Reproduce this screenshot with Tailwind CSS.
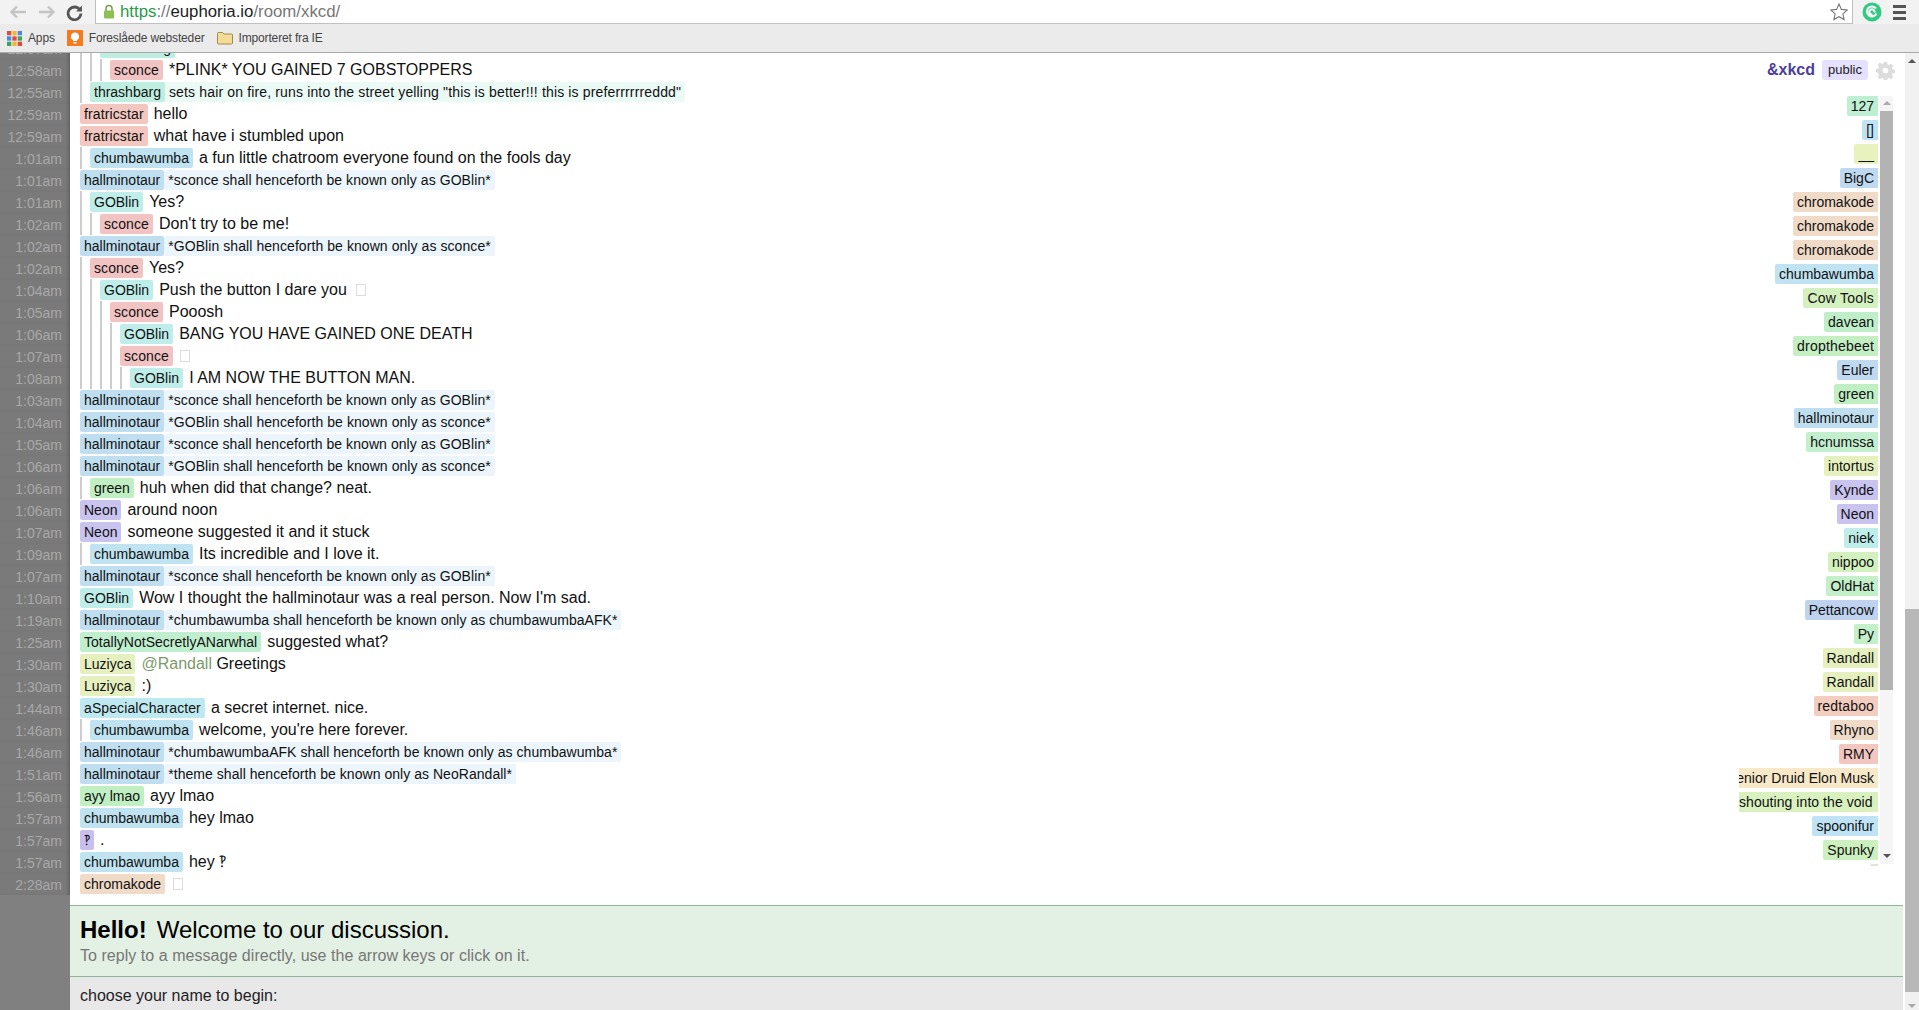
<!DOCTYPE html>
<html lang="en">
<head>
    <meta charset="UTF-8">
    <title>&xkcd - euphoria</title>
    <script src="https://cdn.jsdelivr.net/npm/@tailwindcss/browser@4"></script>
</head>
<body class="h-[1010px] overflow-hidden bg-white font-['Liberation_Sans',Arial,sans-serif] text-[#111]">
    <!-- browser chrome -->
    <div class="flex h-[24px] items-center bg-[#f2f2f2]">
        <div class="flex w-[95px] items-center pl-[8px]">
            <svg class="h-[16px] w-[20px]" viewBox="0 0 20 16" fill="none" stroke="#c4c4c4" stroke-width="2.4"><path d="M18 8H4M9 2.500 3.500 8 9 13.500"/></svg>
            <svg class="ml-[9px] h-[16px] w-[20px]" viewBox="0 0 20 16" fill="none" stroke="#c4c4c4" stroke-width="2.4"><path d="M2 8h14M11 2.500 16.500 8 11 13.500"/></svg>
            <svg class="ml-[9px] h-[17px] w-[17px]" viewBox="0 0 16 16" fill="none" stroke="#555" stroke-width="2.600"><path d="M13 5.500A6 6 0 1 0 14 9"/><path d="M15 1.500V7H9.500z" fill="#555" stroke="none"/></svg>
        </div>
        <div class="flex h-[24px] w-[1758px] items-center border-r border-b border-l border-[#c0c0c0] bg-white pl-[7px]">
            <svg class="h-[15px] w-[12px]" viewBox="0 0 12 15"><path d="M3 7V4.500a3 3 0 0 1 6 0V7" fill="none" stroke="#7a9a50" stroke-width="1.500"/><rect x="1" y="6.500" width="10" height="8" rx="1" fill="#8cc152"/></svg>
            <span class="ml-[5px] text-[16.8px] text-[#777]"><span class="text-[#2a9a48]">https</span>://<span class="text-[#222]">euphoria.io</span>/room/xkcd/</span>
            <svg class="ml-auto mr-[4px] h-[18px] w-[18px]" viewBox="0 0 18 18" fill="#fff" stroke="#777" stroke-width="1.100"><path d="m9 1 2.400 5.400 5.800.6-4.300 3.900 1.200 5.700L9 13.700l-5.100 2.900 1.200-5.700L.8 7l5.800-.6z"/></svg>
        </div>
        <svg class="ml-[9px] h-[20px] w-[20px]" viewBox="0 0 20 20"><circle cx="10" cy="10" r="9.500" fill="#2ecb80"/><path d="M14.500 11.500A5 5 0 1 1 14 6.500M12.500 10.500a2.600 2.600 0 1 0-2 2" fill="none" stroke="#fff" stroke-width="2"/></svg>
        <div class="ml-[11px] flex w-[13px] flex-col gap-[3px]">
            <span class="h-[3px] bg-[#555]"></span><span class="h-[3px] bg-[#555]"></span><span class="h-[3px] bg-[#555]"></span>
        </div>
    </div>
    <div class="flex h-[29px] items-center border-b border-[#a9a9a9] bg-[#ebebeb] pl-[7px] text-[12px] tracking-[-0.15px] text-[#444]">
        <svg class="h-[15px] w-[15px]" viewBox="0 0 14 14">
            <rect width="4" height="4" fill="#e0493b"/><rect x="5" width="4" height="4" fill="#f2b632"/><rect x="10" width="4" height="4" fill="#4a88e8"/>
            <rect y="5" width="4" height="4" fill="#4a88e8"/><rect x="5" y="5" width="4" height="4" fill="#e0493b"/><rect x="10" y="5" width="4" height="4" fill="#3aa757"/>
            <rect y="10" width="4" height="4" fill="#3aa757"/><rect x="5" y="10" width="4" height="4" fill="#f2b632"/><rect x="10" y="10" width="4" height="4" fill="#e0493b"/>
        </svg>
        <span class="ml-[6px]">Apps</span>
        <svg class="ml-[12px] h-[16px] w-[16px]" viewBox="0 0 16 16"><rect width="16" height="16" fill="#f47b20"/><path d="M8 2.500a4 4 0 0 0-2 7.500V11h4v-1a4 4 0 0 0-2-7.500zM6.500 12h3v1.500h-3z" fill="#fff"/></svg>
        <span class="ml-[6px]">Foreslåede websteder</span>
        <svg class="ml-[12px] h-[14px] w-[16px]" viewBox="0 0 16 14"><path d="M.5 2.500a1 1 0 0 1 1-1h4l1.500 1.500h7.500a1 1 0 0 1 1 1v8a1 1 0 0 1-1 1h-13a1 1 0 0 1-1-1z" fill="#f5dc96" stroke="#a08c50"/></svg>
        <span class="ml-[6px]">Importeret fra IE</span>
    </div>

    <div class="flex h-[957px]">
        <div class="flex w-[1903px] flex-col">
            <div class="flex h-[852px] overflow-hidden">
                <!-- chat log -->
                <div class="-mt-[16px] flex-1 bg-[linear-gradient(90deg,#808080_70px,#fff_70px)] text-[16px]">
                    <div class="flex h-[22px]"><span class="w-[70px] bg-[#7a7a7a] pr-[8px] pt-[2px] text-right text-[14px] text-[#a8a8a8] shadow-[inset_-4px_0_4px_-3px_#0004]">12:57am</span><div class="flex items-center pl-[10px]"><span class="mr-[8px] h-full w-[2px] bg-[#ccc]"></span><span class="mr-[8px] h-full w-[2px] bg-[#ccc]"></span><span class="flex h-[20px] items-center rounded-[2px] bg-[#bfeee0] px-[4px] text-[14px]">thrashbarg</span></div></div>
                    <div class="flex h-[22px]"><span class="w-[70px] bg-[#7a7a7a] pr-[8px] pt-[2px] text-right text-[14px] text-[#a8a8a8] shadow-[inset_-4px_0_4px_-3px_#0004]">12:58am</span><div class="flex items-center pl-[10px]"><span class="mr-[8px] h-full w-[2px] bg-[#ccc]"></span><span class="mr-[8px] h-full w-[2px] bg-[#ccc]"></span><span class="mr-[8px] h-full w-[2px] bg-[#ccc]"></span><span class="flex h-[20px] items-center rounded-[2px] bg-[#f1c3c3] px-[4px] text-[14px] tracking-[0.1px]">sconce</span><span class="ml-[6px]">*PLINK* YOU GAINED 7 GOBSTOPPERS</span></div></div>
                    <div class="flex h-[22px]"><span class="w-[70px] bg-[#7a7a7a] pr-[8px] pt-[2px] text-right text-[14px] text-[#a8a8a8] shadow-[inset_-4px_0_4px_-3px_#0004]">12:55am</span><div class="flex items-center pl-[10px]"><span class="mr-[8px] h-full w-[2px] bg-[#ccc]"></span><span class="flex h-[20px] items-center rounded-[2px] bg-[#bfeee0] px-[4px] text-[14px]">thrashbarg</span><span class="flex h-[20px] items-center rounded-[2px] bg-[#ecfaf6] pl-[4px] pr-[4px] text-[14px] tracking-[0.15px]">sets hair on fire, runs into the street yelling "this is better!!! this is preferrrrrreddd"</span></div></div>
                    <div class="flex h-[22px]"><span class="w-[70px] bg-[#7a7a7a] pr-[8px] pt-[2px] text-right text-[14px] text-[#a8a8a8] shadow-[inset_-4px_0_4px_-3px_#0004]">12:59am</span><div class="flex items-center pl-[10px]"><span class="flex h-[20px] items-center rounded-[2px] bg-[#f3c7bf] px-[4px] text-[14px] tracking-[0.12px]">fratricstar</span><span class="ml-[6px]">hello</span></div></div>
                    <div class="flex h-[22px]"><span class="w-[70px] bg-[#7a7a7a] pr-[8px] pt-[2px] text-right text-[14px] text-[#a8a8a8] shadow-[inset_-4px_0_4px_-3px_#0004]">12:59am</span><div class="flex items-center pl-[10px]"><span class="flex h-[20px] items-center rounded-[2px] bg-[#f3c7bf] px-[4px] text-[14px] tracking-[0.12px]">fratricstar</span><span class="ml-[6px]">what have i stumbled upon</span></div></div>
                    <div class="flex h-[22px]"><span class="w-[70px] bg-[#7a7a7a] pr-[8px] pt-[2px] text-right text-[14px] text-[#a8a8a8] shadow-[inset_-4px_0_4px_-3px_#0004]">1:01am</span><div class="flex items-center pl-[10px]"><span class="mr-[8px] h-full w-[2px] bg-[#ccc]"></span><span class="flex h-[20px] items-center rounded-[2px] bg-[#bfe3f0] px-[4px] text-[14px]">chumbawumba</span><span class="ml-[6px]">a fun little chatroom everyone found on the fools day</span></div></div>
                    <div class="flex h-[22px]"><span class="w-[70px] bg-[#7a7a7a] pr-[8px] pt-[2px] text-right text-[14px] text-[#a8a8a8] shadow-[inset_-4px_0_4px_-3px_#0004]">1:01am</span><div class="flex items-center pl-[10px]"><span class="flex h-[20px] items-center rounded-[2px] bg-[#bfdff0] px-[4px] text-[14px]">hallminotaur</span><span class="flex h-[20px] items-center rounded-[2px] bg-[#ebf5fb] pl-[4px] pr-[4px] text-[14px] tracking-[0.07px]">*sconce shall henceforth be known only as GOBlin*</span></div></div>
                    <div class="flex h-[22px]"><span class="w-[70px] bg-[#7a7a7a] pr-[8px] pt-[2px] text-right text-[14px] text-[#a8a8a8] shadow-[inset_-4px_0_4px_-3px_#0004]">1:01am</span><div class="flex items-center pl-[10px]"><span class="mr-[8px] h-full w-[2px] bg-[#ccc]"></span><span class="flex h-[20px] items-center rounded-[2px] bg-[#bfeeea] px-[4px] text-[14px]">GOBlin</span><span class="ml-[6px]">Yes?</span></div></div>
                    <div class="flex h-[22px]"><span class="w-[70px] bg-[#7a7a7a] pr-[8px] pt-[2px] text-right text-[14px] text-[#a8a8a8] shadow-[inset_-4px_0_4px_-3px_#0004]">1:02am</span><div class="flex items-center pl-[10px]"><span class="mr-[8px] h-full w-[2px] bg-[#ccc]"></span><span class="mr-[8px] h-full w-[2px] bg-[#ccc]"></span><span class="flex h-[20px] items-center rounded-[2px] bg-[#f1c3c3] px-[4px] text-[14px] tracking-[0.1px]">sconce</span><span class="ml-[6px]">Don't try to be me!</span></div></div>
                    <div class="flex h-[22px]"><span class="w-[70px] bg-[#7a7a7a] pr-[8px] pt-[2px] text-right text-[14px] text-[#a8a8a8] shadow-[inset_-4px_0_4px_-3px_#0004]">1:02am</span><div class="flex items-center pl-[10px]"><span class="flex h-[20px] items-center rounded-[2px] bg-[#bfdff0] px-[4px] text-[14px]">hallminotaur</span><span class="flex h-[20px] items-center rounded-[2px] bg-[#ebf5fb] pl-[4px] pr-[4px] text-[14px] tracking-[0.07px]">*GOBlin shall henceforth be known only as sconce*</span></div></div>
                    <div class="flex h-[22px]"><span class="w-[70px] bg-[#7a7a7a] pr-[8px] pt-[2px] text-right text-[14px] text-[#a8a8a8] shadow-[inset_-4px_0_4px_-3px_#0004]">1:02am</span><div class="flex items-center pl-[10px]"><span class="mr-[8px] h-full w-[2px] bg-[#ccc]"></span><span class="flex h-[20px] items-center rounded-[2px] bg-[#f1c3c3] px-[4px] text-[14px] tracking-[0.1px]">sconce</span><span class="ml-[6px]">Yes?</span></div></div>
                    <div class="flex h-[22px]"><span class="w-[70px] bg-[#7a7a7a] pr-[8px] pt-[2px] text-right text-[14px] text-[#a8a8a8] shadow-[inset_-4px_0_4px_-3px_#0004]">1:04am</span><div class="flex items-center pl-[10px]"><span class="mr-[8px] h-full w-[2px] bg-[#ccc]"></span><span class="mr-[8px] h-full w-[2px] bg-[#ccc]"></span><span class="flex h-[20px] items-center rounded-[2px] bg-[#bfeeea] px-[4px] text-[14px]">GOBlin</span><span class="ml-[6px]">Push the button I dare you</span><span class="ml-[9px] h-[12px] w-[10px] border border-[#ddd]"></span></div></div>
                    <div class="flex h-[22px]"><span class="w-[70px] bg-[#7a7a7a] pr-[8px] pt-[2px] text-right text-[14px] text-[#a8a8a8] shadow-[inset_-4px_0_4px_-3px_#0004]">1:05am</span><div class="flex items-center pl-[10px]"><span class="mr-[8px] h-full w-[2px] bg-[#ccc]"></span><span class="mr-[8px] h-full w-[2px] bg-[#ccc]"></span><span class="mr-[8px] h-full w-[2px] bg-[#ccc]"></span><span class="flex h-[20px] items-center rounded-[2px] bg-[#f1c3c3] px-[4px] text-[14px] tracking-[0.1px]">sconce</span><span class="ml-[6px]">Pooosh</span></div></div>
                    <div class="flex h-[22px]"><span class="w-[70px] bg-[#7a7a7a] pr-[8px] pt-[2px] text-right text-[14px] text-[#a8a8a8] shadow-[inset_-4px_0_4px_-3px_#0004]">1:06am</span><div class="flex items-center pl-[10px]"><span class="mr-[8px] h-full w-[2px] bg-[#ccc]"></span><span class="mr-[8px] h-full w-[2px] bg-[#ccc]"></span><span class="mr-[8px] h-full w-[2px] bg-[#ccc]"></span><span class="mr-[8px] h-full w-[2px] bg-[#ccc]"></span><span class="flex h-[20px] items-center rounded-[2px] bg-[#bfeeea] px-[4px] text-[14px]">GOBlin</span><span class="ml-[6px]">BANG YOU HAVE GAINED ONE DEATH</span></div></div>
                    <div class="flex h-[22px]"><span class="w-[70px] bg-[#7a7a7a] pr-[8px] pt-[2px] text-right text-[14px] text-[#a8a8a8] shadow-[inset_-4px_0_4px_-3px_#0004]">1:07am</span><div class="flex items-center pl-[10px]"><span class="mr-[8px] h-full w-[2px] bg-[#ccc]"></span><span class="mr-[8px] h-full w-[2px] bg-[#ccc]"></span><span class="mr-[8px] h-full w-[2px] bg-[#ccc]"></span><span class="mr-[8px] h-full w-[2px] bg-[#ccc]"></span><span class="flex h-[20px] items-center rounded-[2px] bg-[#f1c3c3] px-[4px] text-[14px] tracking-[0.1px]">sconce</span><span class="ml-[7px] h-[12px] w-[10px] border border-[#ddd]"></span></div></div>
                    <div class="flex h-[22px]"><span class="w-[70px] bg-[#7a7a7a] pr-[8px] pt-[2px] text-right text-[14px] text-[#a8a8a8] shadow-[inset_-4px_0_4px_-3px_#0004]">1:08am</span><div class="flex items-center pl-[10px]"><span class="mr-[8px] h-full w-[2px] bg-[#ccc]"></span><span class="mr-[8px] h-full w-[2px] bg-[#ccc]"></span><span class="mr-[8px] h-full w-[2px] bg-[#ccc]"></span><span class="mr-[8px] h-full w-[2px] bg-[#ccc]"></span><span class="mr-[8px] h-full w-[2px] bg-[#ccc]"></span><span class="flex h-[20px] items-center rounded-[2px] bg-[#bfeeea] px-[4px] text-[14px]">GOBlin</span><span class="ml-[6px]">I AM NOW THE BUTTON MAN.</span></div></div>
                    <div class="flex h-[22px]"><span class="w-[70px] bg-[#7a7a7a] pr-[8px] pt-[2px] text-right text-[14px] text-[#a8a8a8] shadow-[inset_-4px_0_4px_-3px_#0004]">1:03am</span><div class="flex items-center pl-[10px]"><span class="flex h-[20px] items-center rounded-[2px] bg-[#bfdff0] px-[4px] text-[14px]">hallminotaur</span><span class="flex h-[20px] items-center rounded-[2px] bg-[#ebf5fb] pl-[4px] pr-[4px] text-[14px] tracking-[0.07px]">*sconce shall henceforth be known only as GOBlin*</span></div></div>
                    <div class="flex h-[22px]"><span class="w-[70px] bg-[#7a7a7a] pr-[8px] pt-[2px] text-right text-[14px] text-[#a8a8a8] shadow-[inset_-4px_0_4px_-3px_#0004]">1:04am</span><div class="flex items-center pl-[10px]"><span class="flex h-[20px] items-center rounded-[2px] bg-[#bfdff0] px-[4px] text-[14px]">hallminotaur</span><span class="flex h-[20px] items-center rounded-[2px] bg-[#ebf5fb] pl-[4px] pr-[4px] text-[14px] tracking-[0.07px]">*GOBlin shall henceforth be known only as sconce*</span></div></div>
                    <div class="flex h-[22px]"><span class="w-[70px] bg-[#7a7a7a] pr-[8px] pt-[2px] text-right text-[14px] text-[#a8a8a8] shadow-[inset_-4px_0_4px_-3px_#0004]">1:05am</span><div class="flex items-center pl-[10px]"><span class="flex h-[20px] items-center rounded-[2px] bg-[#bfdff0] px-[4px] text-[14px]">hallminotaur</span><span class="flex h-[20px] items-center rounded-[2px] bg-[#ebf5fb] pl-[4px] pr-[4px] text-[14px] tracking-[0.07px]">*sconce shall henceforth be known only as GOBlin*</span></div></div>
                    <div class="flex h-[22px]"><span class="w-[70px] bg-[#7a7a7a] pr-[8px] pt-[2px] text-right text-[14px] text-[#a8a8a8] shadow-[inset_-4px_0_4px_-3px_#0004]">1:06am</span><div class="flex items-center pl-[10px]"><span class="flex h-[20px] items-center rounded-[2px] bg-[#bfdff0] px-[4px] text-[14px]">hallminotaur</span><span class="flex h-[20px] items-center rounded-[2px] bg-[#ebf5fb] pl-[4px] pr-[4px] text-[14px] tracking-[0.07px]">*GOBlin shall henceforth be known only as sconce*</span></div></div>
                    <div class="flex h-[22px]"><span class="w-[70px] bg-[#7a7a7a] pr-[8px] pt-[2px] text-right text-[14px] text-[#a8a8a8] shadow-[inset_-4px_0_4px_-3px_#0004]">1:06am</span><div class="flex items-center pl-[10px]"><span class="mr-[8px] h-full w-[2px] bg-[#ccc]"></span><span class="flex h-[20px] items-center rounded-[2px] bg-[#bfefc3] px-[4px] text-[14px]">green</span><span class="ml-[6px]">huh when did that change? neat.</span></div></div>
                    <div class="flex h-[22px]"><span class="w-[70px] bg-[#7a7a7a] pr-[8px] pt-[2px] text-right text-[14px] text-[#a8a8a8] shadow-[inset_-4px_0_4px_-3px_#0004]">1:06am</span><div class="flex items-center pl-[10px]"><span class="flex h-[20px] items-center rounded-[2px] bg-[#c9c3ef] px-[4px] text-[14px]">Neon</span><span class="ml-[6px]">around noon</span></div></div>
                    <div class="flex h-[22px]"><span class="w-[70px] bg-[#7a7a7a] pr-[8px] pt-[2px] text-right text-[14px] text-[#a8a8a8] shadow-[inset_-4px_0_4px_-3px_#0004]">1:07am</span><div class="flex items-center pl-[10px]"><span class="flex h-[20px] items-center rounded-[2px] bg-[#c9c3ef] px-[4px] text-[14px]">Neon</span><span class="ml-[6px]">someone suggested it and it stuck</span></div></div>
                    <div class="flex h-[22px]"><span class="w-[70px] bg-[#7a7a7a] pr-[8px] pt-[2px] text-right text-[14px] text-[#a8a8a8] shadow-[inset_-4px_0_4px_-3px_#0004]">1:09am</span><div class="flex items-center pl-[10px]"><span class="mr-[8px] h-full w-[2px] bg-[#ccc]"></span><span class="flex h-[20px] items-center rounded-[2px] bg-[#bfe3f0] px-[4px] text-[14px]">chumbawumba</span><span class="ml-[6px]">Its incredible and I love it.</span></div></div>
                    <div class="flex h-[22px]"><span class="w-[70px] bg-[#7a7a7a] pr-[8px] pt-[2px] text-right text-[14px] text-[#a8a8a8] shadow-[inset_-4px_0_4px_-3px_#0004]">1:07am</span><div class="flex items-center pl-[10px]"><span class="flex h-[20px] items-center rounded-[2px] bg-[#bfdff0] px-[4px] text-[14px]">hallminotaur</span><span class="flex h-[20px] items-center rounded-[2px] bg-[#ebf5fb] pl-[4px] pr-[4px] text-[14px] tracking-[0.07px]">*sconce shall henceforth be known only as GOBlin*</span></div></div>
                    <div class="flex h-[22px]"><span class="w-[70px] bg-[#7a7a7a] pr-[8px] pt-[2px] text-right text-[14px] text-[#a8a8a8] shadow-[inset_-4px_0_4px_-3px_#0004]">1:10am</span><div class="flex items-center pl-[10px]"><span class="flex h-[20px] items-center rounded-[2px] bg-[#bfeeea] px-[4px] text-[14px]">GOBlin</span><span class="ml-[6px]">Wow I thought the hallminotaur was a real person. Now I'm sad.</span></div></div>
                    <div class="flex h-[22px]"><span class="w-[70px] bg-[#7a7a7a] pr-[8px] pt-[2px] text-right text-[14px] text-[#a8a8a8] shadow-[inset_-4px_0_4px_-3px_#0004]">1:19am</span><div class="flex items-center pl-[10px]"><span class="flex h-[20px] items-center rounded-[2px] bg-[#bfdff0] px-[4px] text-[14px]">hallminotaur</span><span class="flex h-[20px] items-center rounded-[2px] bg-[#ebf5fb] pl-[4px] pr-[4px] text-[14px] tracking-[0.04px]">*chumbawumba shall henceforth be known only as chumbawumbaAFK*</span></div></div>
                    <div class="flex h-[22px]"><span class="w-[70px] bg-[#7a7a7a] pr-[8px] pt-[2px] text-right text-[14px] text-[#a8a8a8] shadow-[inset_-4px_0_4px_-3px_#0004]">1:25am</span><div class="flex items-center pl-[10px]"><span class="flex h-[20px] items-center rounded-[2px] bg-[#bfefcf] px-[4px] text-[14px] tracking-[0.02px]">TotallyNotSecretlyANarwhal</span><span class="ml-[6px]">suggested what?</span></div></div>
                    <div class="flex h-[22px]"><span class="w-[70px] bg-[#7a7a7a] pr-[8px] pt-[2px] text-right text-[14px] text-[#a8a8a8] shadow-[inset_-4px_0_4px_-3px_#0004]">1:30am</span><div class="flex items-center pl-[10px]"><span class="flex h-[20px] items-center rounded-[2px] bg-[#e6f0bf] px-[4px] text-[14px]">Luziyca</span><span class="ml-[6px]"><span class="text-[#7a9a6a]">@Randall</span> Greetings</span></div></div>
                    <div class="flex h-[22px]"><span class="w-[70px] bg-[#7a7a7a] pr-[8px] pt-[2px] text-right text-[14px] text-[#a8a8a8] shadow-[inset_-4px_0_4px_-3px_#0004]">1:30am</span><div class="flex items-center pl-[10px]"><span class="flex h-[20px] items-center rounded-[2px] bg-[#e6f0bf] px-[4px] text-[14px]">Luziyca</span><span class="ml-[6px]">:)</span></div></div>
                    <div class="flex h-[22px]"><span class="w-[70px] bg-[#7a7a7a] pr-[8px] pt-[2px] text-right text-[14px] text-[#a8a8a8] shadow-[inset_-4px_0_4px_-3px_#0004]">1:44am</span><div class="flex items-center pl-[10px]"><span class="flex h-[20px] items-center rounded-[2px] bg-[#bfe9f0] px-[4px] text-[14px] tracking-[0.1px]">aSpecialCharacter</span><span class="ml-[6px]">a secret internet. nice.</span></div></div>
                    <div class="flex h-[22px]"><span class="w-[70px] bg-[#7a7a7a] pr-[8px] pt-[2px] text-right text-[14px] text-[#a8a8a8] shadow-[inset_-4px_0_4px_-3px_#0004]">1:46am</span><div class="flex items-center pl-[10px]"><span class="mr-[8px] h-full w-[2px] bg-[#ccc]"></span><span class="flex h-[20px] items-center rounded-[2px] bg-[#bfe3f0] px-[4px] text-[14px]">chumbawumba</span><span class="ml-[6px]">welcome, you're here forever.</span></div></div>
                    <div class="flex h-[22px]"><span class="w-[70px] bg-[#7a7a7a] pr-[8px] pt-[2px] text-right text-[14px] text-[#a8a8a8] shadow-[inset_-4px_0_4px_-3px_#0004]">1:46am</span><div class="flex items-center pl-[10px]"><span class="flex h-[20px] items-center rounded-[2px] bg-[#bfdff0] px-[4px] text-[14px]">hallminotaur</span><span class="flex h-[20px] items-center rounded-[2px] bg-[#ebf5fb] pl-[4px] pr-[4px] text-[14px] tracking-[0.04px]">*chumbawumbaAFK shall henceforth be known only as chumbawumba*</span></div></div>
                    <div class="flex h-[22px]"><span class="w-[70px] bg-[#7a7a7a] pr-[8px] pt-[2px] text-right text-[14px] text-[#a8a8a8] shadow-[inset_-4px_0_4px_-3px_#0004]">1:51am</span><div class="flex items-center pl-[10px]"><span class="flex h-[20px] items-center rounded-[2px] bg-[#bfdff0] px-[4px] text-[14px]">hallminotaur</span><span class="flex h-[20px] items-center rounded-[2px] bg-[#ebf5fb] pl-[4px] pr-[4px] text-[14px] tracking-[0.04px]">*theme shall henceforth be known only as NeoRandall*</span></div></div>
                    <div class="flex h-[22px]"><span class="w-[70px] bg-[#7a7a7a] pr-[8px] pt-[2px] text-right text-[14px] text-[#a8a8a8] shadow-[inset_-4px_0_4px_-3px_#0004]">1:56am</span><div class="flex items-center pl-[10px]"><span class="flex h-[20px] items-center rounded-[2px] bg-[#bfefc3] px-[4px] text-[14px]">ayy lmao</span><span class="ml-[6px]">ayy lmao</span></div></div>
                    <div class="flex h-[22px]"><span class="w-[70px] bg-[#7a7a7a] pr-[8px] pt-[2px] text-right text-[14px] text-[#a8a8a8] shadow-[inset_-4px_0_4px_-3px_#0004]">1:57am</span><div class="flex items-center pl-[10px]"><span class="flex h-[20px] items-center rounded-[2px] bg-[#bfe3f0] px-[4px] text-[14px]">chumbawumba</span><span class="ml-[6px]">hey lmao</span></div></div>
                    <div class="flex h-[22px]"><span class="w-[70px] bg-[#7a7a7a] pr-[8px] pt-[2px] text-right text-[14px] text-[#a8a8a8] shadow-[inset_-4px_0_4px_-3px_#0004]">1:57am</span><div class="flex items-center pl-[10px]"><span class="flex h-[20px] items-center rounded-[2px] bg-[#c9bfef] px-[4px] text-[14px]">‽</span><span class="ml-[6px]">.</span></div></div>
                    <div class="flex h-[22px]"><span class="w-[70px] bg-[#7a7a7a] pr-[8px] pt-[2px] text-right text-[14px] text-[#a8a8a8] shadow-[inset_-4px_0_4px_-3px_#0004]">1:57am</span><div class="flex items-center pl-[10px]"><span class="flex h-[20px] items-center rounded-[2px] bg-[#bfe3f0] px-[4px] text-[14px]">chumbawumba</span><span class="ml-[6px]">hey ‽</span></div></div>
                    <div class="flex h-[22px]"><span class="w-[70px] bg-[#7a7a7a] pr-[8px] pt-[2px] text-right text-[14px] text-[#a8a8a8] shadow-[inset_-4px_0_4px_-3px_#0004]">2:28am</span><div class="flex items-center pl-[10px]"><span class="flex h-[20px] items-center rounded-[2px] bg-[#f0dac8] px-[4px] text-[14px]">chromakode</span><span class="ml-[8px] h-[12px] w-[10px] border border-[#ddd]"></span></div></div>
                </div>

                <!-- room title + user list -->
                <div class="flex w-[164px] flex-col">
                    <div class="flex h-[34px] items-center">
                        <span class="ml-[28px] text-[16px] font-bold text-[#4b3f9e]">&amp;xkcd</span>
                        <span class="ml-[7px] flex h-[20px] items-center rounded-[3px] bg-[#e4e0fd] px-[6px] text-[13px] text-[#222]">public</span>
                        <svg class="ml-[8px] h-[19px] w-[19px]" viewBox="0 0 20 20" fill="#ddd"><path fill-rule="evenodd" d="M8.300 1h3.400l.5 2.600 1.500.6 2.200-1.500 2.400 2.400-1.500 2.200.6 1.500 2.600.5v3.400l-2.600.5-.6 1.500 1.500 2.200-2.400 2.400-2.200-1.500-1.500.6-.5 2.600H8.300l-.5-2.600-1.500-.6-2.200 1.500-2.400-2.400 1.500-2.200-.6-1.500L0 11.700V8.300l2.600-.5.6-1.500-1.500-2.200 2.400-2.400 2.200 1.500 1.500-.6zM10 7a3 3 0 1 0 0 6 3 3 0 0 0 0-6z"/></svg>
                    </div>
                    <div class="mt-[9px] flex h-[779px]">
                        <div class="flex h-[770px] w-[139px] flex-col items-end gap-[4px] overflow-hidden text-[14px]">
                            <span class="h-[20px] shrink-0 rounded-l-[2px] bg-[#bfefd3] px-[4px] leading-[20px]">127</span>
                            <span class="h-[20px] shrink-0 rounded-l-[2px] bg-[#bfe3f5] px-[4px] leading-[20px]">[]</span>
                            <span class="h-[20px] shrink-0 rounded-l-[2px] bg-[#e8f2bf] px-[4px] leading-[20px]">__</span>
                            <span class="h-[20px] shrink-0 rounded-l-[2px] bg-[#bfd9f0] px-[4px] leading-[20px]">BigC</span>
                            <span class="h-[20px] shrink-0 rounded-l-[2px] bg-[#f0dac8] px-[4px] leading-[20px]">chromakode</span>
                            <span class="h-[20px] shrink-0 rounded-l-[2px] bg-[#f0dac8] px-[4px] leading-[20px]">chromakode</span>
                            <span class="h-[20px] shrink-0 rounded-l-[2px] bg-[#f0dac8] px-[4px] leading-[20px]">chromakode</span>
                            <span class="h-[20px] shrink-0 rounded-l-[2px] bg-[#bfe3f0] px-[4px] leading-[20px]">chumbawumba</span>
                            <span class="h-[20px] shrink-0 rounded-l-[2px] bg-[#d3f0bf] px-[4px] leading-[20px] tracking-[0.25px]">Cow Tools</span>
                            <span class="h-[20px] shrink-0 rounded-l-[2px] bg-[#bfefc9] px-[4px] leading-[20px]">davean</span>
                            <span class="h-[20px] shrink-0 rounded-l-[2px] bg-[#c3efc3] px-[4px] leading-[20px] tracking-[0.2px]">dropthebeet</span>
                            <span class="h-[20px] shrink-0 rounded-l-[2px] bg-[#bfd9f0] px-[4px] leading-[20px]">Euler</span>
                            <span class="h-[20px] shrink-0 rounded-l-[2px] bg-[#bfefc3] px-[4px] leading-[20px]">green</span>
                            <span class="h-[20px] shrink-0 rounded-l-[2px] bg-[#bfdff0] px-[4px] leading-[20px]">hallminotaur</span>
                            <span class="h-[20px] shrink-0 rounded-l-[2px] bg-[#c3efcf] px-[4px] leading-[20px]">hcnumssa</span>
                            <span class="h-[20px] shrink-0 rounded-l-[2px] bg-[#e6f0bf] px-[4px] leading-[20px]">intortus</span>
                            <span class="h-[20px] shrink-0 rounded-l-[2px] bg-[#c9c3ef] px-[4px] leading-[20px]">Kynde</span>
                            <span class="h-[20px] shrink-0 rounded-l-[2px] bg-[#c9c3ef] px-[4px] leading-[20px]">Neon</span>
                            <span class="h-[20px] shrink-0 rounded-l-[2px] bg-[#bfeeea] px-[4px] leading-[20px]">niek</span>
                            <span class="h-[20px] shrink-0 rounded-l-[2px] bg-[#d3f0bf] px-[4px] leading-[20px]">nippoo</span>
                            <span class="h-[20px] shrink-0 rounded-l-[2px] bg-[#c3efc9] px-[4px] leading-[20px]">OldHat</span>
                            <span class="h-[20px] shrink-0 rounded-l-[2px] bg-[#bfd3f0] px-[4px] leading-[20px]">Pettancow</span>
                            <span class="h-[20px] shrink-0 rounded-l-[2px] bg-[#c3efc9] px-[4px] leading-[20px]">Py</span>
                            <span class="h-[20px] shrink-0 rounded-l-[2px] bg-[#e6f0bf] px-[4px] leading-[20px]">Randall</span>
                            <span class="h-[20px] shrink-0 rounded-l-[2px] bg-[#e6f0bf] px-[4px] leading-[20px]">Randall</span>
                            <span class="h-[20px] shrink-0 rounded-l-[2px] bg-[#f3cdbf] px-[4px] leading-[20px] tracking-[0.15px]">redtaboo</span>
                            <span class="h-[20px] shrink-0 rounded-l-[2px] bg-[#f0dac8] px-[4px] leading-[20px]">Rhyno</span>
                            <span class="h-[20px] shrink-0 rounded-l-[2px] bg-[#f3c7bf] px-[4px] leading-[20px]">RMY</span>
                            <span class="h-[20px] shrink-0 whitespace-nowrap bg-[#f7e8c8] px-[4px] leading-[20px]">Senior Druid Elon Musk</span>
                            <span class="h-[20px] w-[139px] shrink-0 overflow-hidden whitespace-nowrap bg-[#d9f0bf] leading-[20px] tracking-[0.06px]">shouting into the void</span>
                            <span class="h-[20px] shrink-0 rounded-l-[2px] bg-[#bfe3f5] px-[4px] leading-[20px]">spoonifur</span>
                            <span class="h-[20px] shrink-0 rounded-l-[2px] bg-[#cdf0bf] px-[4px] leading-[20px]">Spunky</span>
                            <span class="h-[20px] shrink-0 rounded-l-[2px] bg-[#dfe6d8] px-[4px] leading-[20px]"></span>
                        </div>
                        <!-- user list scrollbar -->
                        <div class="ml-[2px] flex h-[768px] w-[13px] flex-col items-center bg-[#f5f5f5]">
                            <span class="mt-[5px] h-0 w-0 border-x-[4px] border-b-[4px] border-x-transparent border-b-[#aaa]"></span>
                            <span class="mt-[6px] h-[579px] w-[13px] bg-[#b3b3b3]"></span>
                            <span class="mt-auto mb-[6px] h-0 w-0 border-x-[4px] border-t-[4px] border-x-transparent border-t-[#555]"></span>
                        </div>
                    </div>
                </div>
            </div>

            <!-- welcome pane + entry -->
            <div class="flex h-[72px] bg-[#808080]">
                <div class="w-[70px] shrink-0"></div>
                <div class="flex-1 border-t border-b border-[#8fb598] bg-[#e3f0e4] pl-[10px] pt-[10px]">
                    <p class="text-[24px] leading-[28px] text-black"><b>Hello!</b><span class="ml-[10px]">Welcome to our discussion.</span></p>
                    <p class="text-[16px] leading-[23px] tracking-[0.04px] text-[#777]">To reply to a message directly, use the arrow keys or click on it.</p>
                </div>
            </div>
            <div class="flex h-[33px] bg-[#808080]">
                <div class="w-[70px] shrink-0"></div>
                <span class="flex-1 bg-[#e8e8e8] pl-[10px] pt-[7px] text-[16px] text-[#222]">choose your name to begin:</span>
            </div>
        </div>

        <!-- page scrollbar -->
        <div class="ml-[2px] flex w-[14px] flex-col items-center bg-[#f1f1f1]">
            <span class="mt-[6px] h-0 w-0 border-x-[4px] border-b-[4px] border-x-transparent border-b-[#555]"></span>
            <span class="mt-[546px] h-[383px] w-[14px] bg-[#b8b8b8]"></span>
            <span class="mt-auto mb-[2px] h-0 w-0 border-x-[4px] border-t-[4px] border-x-transparent border-t-[#aaa]"></span>
        </div>
    </div>
</body>
</html>
